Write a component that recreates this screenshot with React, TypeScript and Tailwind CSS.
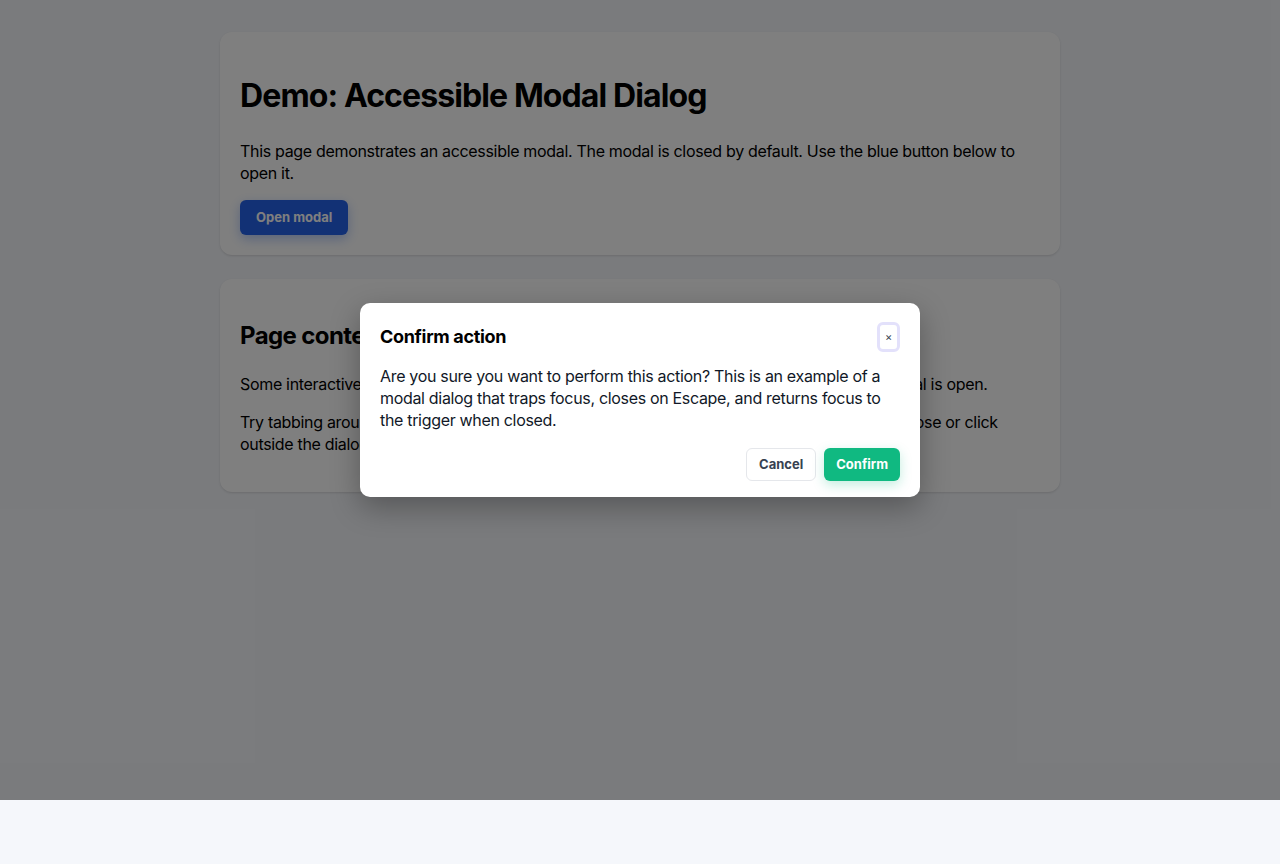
export default function App() {
  return (
    <div className="min-h-screen bg-[#f5f7fb] text-black tracking-[-0.02em]" style={{ fontFamily: "Inter, 'Noto Sans', sans-serif" }}>
      <div className="relative h-[800px]">
        <main className="mx-auto flex w-[840px] flex-col gap-6 pt-8">
          {/* Intro card */}
          <section className="rounded-xl bg-white p-5 shadow-sm">
            <h1 className="mt-[24px] mb-[24px] text-[32px] leading-[40px] font-bold tracking-[-0.028em]">Demo: Accessible Modal Dialog</h1>
            <p className="text-base leading-[22px]">
              This page demonstrates an accessible modal. The modal is closed by default. Use the blue button below to
              open it.
            </p>
            <button className="mt-[16px] h-[35px] rounded-md bg-[#2563eb] px-4 text-[13px] font-bold tracking-normal text-white shadow-[0_4px_12px_rgba(37,99,235,0.35)]">
              Open modal
            </button>
          </section>

          {/* Page content card */}
          <section className="rounded-xl bg-white px-5 pt-5 pb-[21px] shadow-sm">
            <h2 className="mt-[22px] mb-[22px] text-2xl leading-[30px] font-bold tracking-[-0.025em]">Page content</h2>
            <p className="mb-4 text-base leading-[22px]">
              Some interactive content lives here but it should not be reachable by keyboard while the modal is open.
            </p>
            <p className="mb-4 text-base leading-[22px]">
              Try tabbing around the page: focus should stay inside the dialog box. Now press Escape to close or click
              outside the dialog to dismiss it.
            </p>
          </section>
        </main>

        {/* Overlay */}
        <div className="absolute inset-0 flex items-start justify-center bg-black/50 pt-[303px]">
          <div
            role="dialog"
            aria-modal="true"
            aria-labelledby="dlg-title"
            className="w-[560px] rounded-[10px] bg-white px-5 pt-[19px] pb-4 shadow-[0_10px_30px_rgba(0,0,0,0.3)]"
          >
            <div className="flex items-center justify-between">
              <h3 id="dlg-title" className="text-lg leading-[30px] font-bold">Confirm action</h3>
              <button
                aria-label="Close"
                className="flex h-[30px] w-[23px] items-center justify-center rounded-md border-[3px] border-[#e3e1fb] bg-white text-[11px] leading-none text-[#374151]"
              >
                ×
              </button>
            </div>
            <p className="mt-[13px] text-base leading-[22px] text-[#111827]">
              Are you sure you want to perform this action? This is an example of a modal dialog that traps focus,
              closes on Escape, and returns focus to the trigger when closed.
            </p>
            <div className="mt-[17px] flex justify-end gap-2">
              <button className="h-[33px] rounded-md border border-[#e5e7eb] bg-white px-3 text-[13px] font-bold tracking-normal text-[#374151]">
                Cancel
              </button>
              <button className="h-[33px] rounded-md bg-[#10b981] px-3 text-[13px] font-bold tracking-normal text-white shadow-[0_4px_12px_rgba(16,185,129,0.25)]">
                Confirm
              </button>
            </div>
          </div>
        </div>
      </div>
    </div>
  );
}
